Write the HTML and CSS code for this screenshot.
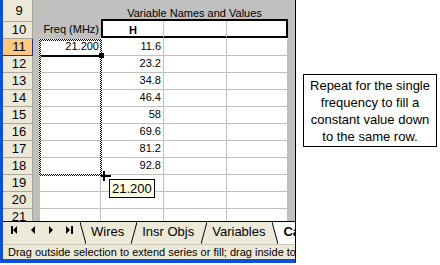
FILE: index.html
```html
<!DOCTYPE html>
<html lang="en">
<head>
    <meta charset="UTF-8">
    <title>Fill Series</title>
    <link rel="stylesheet" href="styles.css">
</head>
<body>
<div class="page">
    <div class="window">
        <div class="sheet">
            <div class="gutter gutter-left"></div>
            <div class="gutter gutter-right"></div>

            <div class="rowhead first">9</div>
            <div class="banner-blank"></div>
            <div class="banner">Variable Names and Values</div>

            <div class="rowhead">10</div>
            <div class="label">Freq (MHz)</div>
            <div class="names">
                <div class="name">H</div>
                <div class="name"></div>
                <div class="name"></div>
            </div>

            <div class="rowhead on">11</div>
            <div class="cell freq active">21.200</div>
            <div class="cell">11.6</div>
            <div class="cell"></div>
            <div class="cell"></div>

            <div class="rowhead">12</div>
            <div class="cell freq"></div>
            <div class="cell">23.2</div>
            <div class="cell"></div>
            <div class="cell"></div>

            <div class="rowhead">13</div>
            <div class="cell freq"></div>
            <div class="cell">34.8</div>
            <div class="cell"></div>
            <div class="cell"></div>

            <div class="rowhead">14</div>
            <div class="cell freq"></div>
            <div class="cell">46.4</div>
            <div class="cell"></div>
            <div class="cell"></div>

            <div class="rowhead">15</div>
            <div class="cell freq"></div>
            <div class="cell">58</div>
            <div class="cell"></div>
            <div class="cell"></div>

            <div class="rowhead">16</div>
            <div class="cell freq"></div>
            <div class="cell">69.6</div>
            <div class="cell"></div>
            <div class="cell"></div>

            <div class="rowhead">17</div>
            <div class="cell freq"></div>
            <div class="cell">81.2</div>
            <div class="cell"></div>
            <div class="cell"></div>

            <div class="rowhead">18</div>
            <div class="cell freq"></div>
            <div class="cell">92.8</div>
            <div class="cell"></div>
            <div class="cell"></div>

            <div class="rowhead">19</div>
            <div class="cell freq"></div>
            <div class="cell"></div>
            <div class="cell"></div>
            <div class="cell"></div>

            <div class="rowhead">20</div>
            <div class="cell freq"></div>
            <div class="cell"></div>
            <div class="cell"></div>
            <div class="cell"></div>

            <div class="rowhead last">21</div>
            <div class="cell freq last"></div>
            <div class="cell last"></div>
            <div class="cell last"></div>
            <div class="cell last"></div>

            <!-- fill preview, drag cursor and value tip sit over the grid -->
            <div class="ants"></div>
            <div class="handle"></div>
            <svg class="cross" width="10" height="10" viewBox="0 0 10 10">
                <rect x="2" y="0" width="2" height="10" fill="#000"/>
                <rect x="0" y="4" width="10" height="2" fill="#000"/>
            </svg>
            <div class="tip">21.200</div>
        </div>

        <div class="tabs">
            <div class="nav">
                <svg width="8" height="8" viewBox="0 0 8 8"><rect x="0" y="0" width="2" height="8"/><polygon points="6,0 6,8 2,4"/></svg>
                <svg width="8" height="8" viewBox="0 0 8 8"><polygon points="6,0 6,8 2,4"/></svg>
                <svg width="8" height="8" viewBox="0 0 8 8"><polygon points="2,0 2,8 6,4"/></svg>
                <svg width="8" height="8" viewBox="0 0 8 8"><polygon points="1,0 1,8 5,4"/><rect x="6" y="0" width="2" height="8"/></svg>
            </div>
            <svg class="slant" width="6" height="22" viewBox="0 0 6 22"><line x1="0" y1="0" x2="6" y2="22"/></svg>
            <span class="tab">Wires</span>
            <svg class="slant" width="6" height="22" viewBox="0 0 6 22"><line x1="0" y1="22" x2="6" y2="0"/></svg>
            <span class="tab">Insr Objs</span>
            <svg class="slant" width="6" height="22" viewBox="0 0 6 22"><line x1="0" y1="22" x2="6" y2="0"/></svg>
            <span class="tab">Variables</span>
            <svg class="slant front" width="6" height="22" viewBox="0 0 6 22"><polygon points="0,0 6,0 6,22" fill="#fff"/><line x1="0" y1="0" x2="6" y2="22"/></svg>
            <span class="tab on">Ca</span>
        </div>

        <div class="status">Drag outside selection to extend series or fill; drag inside to</div>
    </div>

    <div class="aside">
        <div class="note">Repeat for the single<br>frequency to fill a<br>constant value down<br>to the same row.</div>
    </div>
</div>
</body>
</html>
```

FILE: styles.css
```css
body {
    margin: 0;
    background-color: #fff;
    font-family: "Liberation Sans", Arial, sans-serif;
}

.page {
    display: flex;
    width: 440px;
    height: 265px;
}

.window {
    width: 296px;
    height: 263px;
    box-sizing: border-box;
    border-left: 3px solid #0b50d8;
    border-right: 1px solid #000;
    border-bottom: 4px solid #0b50d8;
    background-color: #ece9d8;
    display: flex;
    flex-direction: column;
    overflow: hidden;
}

/* worksheet grid */
.sheet {
    position: relative;
    display: grid;
    grid-template-columns: 30px 7px 61px 63px 63px 61px 7px;
    grid-template-rows: 22px repeat(11, 17px) 12px;
    background-color: #fff;
    font-size: 11px;
    color: #000;
}

.gutter {
    grid-row: 1 / -1;
    background-color: #c0c0c0;
}

.gutter-left {
    grid-column: 2;
}

.gutter-right {
    grid-column: 7;
}

.rowhead {
    grid-column: 1;
    box-sizing: border-box;
    padding-left: 3px;
    background-color: #ece9d8;
    border-right: 1px solid #aca899;
    border-bottom: 1px solid #aca899;
    font-size: 13px;
    line-height: 16px;
    text-align: center;
    overflow: hidden;
}

.rowhead.first {
    line-height: 21px;
}

.rowhead.on {
    background-color: #ffc880;
    border-color: #2e2e7a;
}

.rowhead.last {
    border-bottom: none;
}

.banner-blank {
    background-color: #c0c0c0;
}

.banner {
    grid-column: span 3;
    background-color: #c0c0c0;
    padding-top: 6px;
    line-height: 14px;
    text-align: center;
}

.label {
    background-color: #c0c0c0;
    padding-right: 2px;
    line-height: 14px;
    text-align: right;
}

.names {
    grid-column: span 3;
    align-self: start;
    margin-top: -3px;
    height: 19px;
    box-sizing: border-box;
    border: 2px solid #000;
    background-color: #fff;
    display: grid;
    grid-template-columns: 61px 63px 1fr;
}

.name {
    border-right: 1px solid #c0c0c0;
    padding-top: 2px;
    line-height: 14px;
    font-weight: bold;
    text-align: center;
}

.name:last-child {
    border-right: none;
}

.cell {
    box-sizing: border-box;
    border-right: 1px solid #c0c0c0;
    border-bottom: 1px solid #c0c0c0;
    padding-right: 2px;
    line-height: 14px;
    text-align: right;
}

.cell.freq {
    padding-right: 1px;
}

.cell.active {
    border-bottom-color: #000;
    box-shadow: 0 1px 0 #000;
}

.cell.last {
    border-bottom: none;
}

.ants {
    position: absolute;
    left: 36px;
    top: 39px;
    width: 63px;
    height: 137px;
    box-sizing: border-box;
    padding: 2px;
    background: repeating-conic-gradient(#000 0 25%, #fff 0 50%) 0 0 / 2px 2px;
    -webkit-mask: linear-gradient(#000 0 0) content-box, linear-gradient(#000 0 0);
    -webkit-mask-composite: xor;
    mask-composite: exclude;
}

.handle {
    position: absolute;
    left: 96px;
    top: 53px;
    width: 5px;
    height: 5px;
    background-color: #000;
}

.cross {
    position: absolute;
    left: 98px;
    top: 171px;
}

.tip {
    position: absolute;
    left: 106px;
    top: 179px;
    width: 46px;
    height: 19px;
    box-sizing: border-box;
    border: 1px solid #000;
    background-color: #ffffe1;
    font-size: 13px;
    line-height: 17px;
    padding-left: 2px;
}

/* sheet tabs */
.tabs {
    height: 24px;
    box-sizing: border-box;
    border-top: 1px solid #000;
    border-bottom: 1px solid #c9c6b6;
    display: flex;
    font-size: 13px;
    white-space: nowrap;
}

.nav {
    width: 77px;
    flex-shrink: 0;
    display: flex;
    align-items: flex-start;
    gap: 10px;
    padding: 4px 0 0 8px;
    box-sizing: border-box;
}

.slant {
    flex-shrink: 0;
}

.slant line {
    stroke: #000;
    stroke-width: 1;
}

.tab {
    padding: 2px 7px 0 5px;
    line-height: 15px;
}

.tab.on {
    flex: 1;
    background-color: #fff;
    font-weight: bold;
}

.status {
    height: 14px;
    padding: 1px 0 0 5px;
    font-size: 11px;
    line-height: 13px;
    white-space: nowrap;
    overflow: hidden;
}

/* callout beside the window */
.aside {
    flex: 1;
}

.note {
    width: 134px;
    height: 73px;
    box-sizing: border-box;
    margin: 74px 0 0 7px;
    border: 1px solid #000;
    padding-top: 2px;
    font-size: 13px;
    line-height: 17px;
    text-align: center;
}
```
